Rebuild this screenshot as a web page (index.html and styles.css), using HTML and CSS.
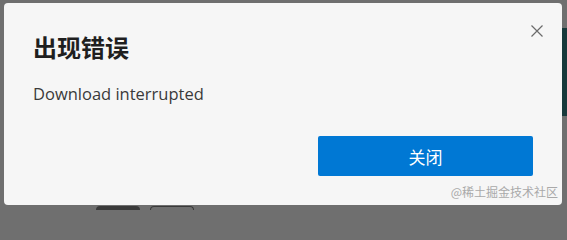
FILE: index.html
```html
<!DOCTYPE html>
<html lang="zh-CN">
<head>
<meta charset="utf-8">
<link rel="stylesheet" href="styles.css">
</head>
<body>
<div class="page">
  <div class="dialog">
    <button class="close" aria-label="关闭">
      <svg width="12" height="12" viewBox="0 0 12 12"><path d="M0.5 0.5L11.5 11.5M11.5 0.5L0.5 11.5" stroke="#6b6b6b" stroke-width="1.2" fill="none"/></svg>
    </button>
    <h1 class="title">出现错误</h1>
    <p class="message">Download interrupted</p>
    <div class="actions">
      <button class="primary">关闭</button>
    </div>
  </div>
  <div class="underlay">
    <span class="chip dark"></span>
    <span class="chip outline"></span>
  </div>
  <div class="watermark">@稀土掘金技术社区</div>
</div>
</body>
</html>
```
FILE: styles.css
```css
html, body {
  margin: 0;
  padding: 0;
  overflow: hidden;
}
body {
  width: 567px;
  height: 210px;
  background: #6f6f6f;
  font-family: "Open Sans", "Noto Sans", "Noto Sans CJK SC", sans-serif;
}
.page {
  position: relative;
  width: 567px;
  height: 210px;
  overflow: hidden;
  background:
    linear-gradient(#17393b, #17393b) 562px 28px / 5px 88px no-repeat,
    #6f6f6f;
}
.dialog {
  position: relative;
  margin: 3px 0 0 4px;
  width: 558px;
  height: 202px;
  box-sizing: border-box;
  background: #f6f6f6;
  border-radius: 4px;
  padding: 27px 29px 0 29px;
  display: flex;
  flex-direction: column;
}
.close {
  position: absolute;
  top: 22px;
  right: 19px;
  width: 12px;
  height: 12px;
  padding: 0;
  border: 0;
  background: none;
  display: flex;
}
.title {
  margin: 0;
  font-family: "Noto Sans CJK SC", sans-serif;
  font-weight: 700;
  font-size: 24px;
  line-height: 34px;
  color: #1f1f1f;
}
.message {
  margin: 19px 0 0 0;
  font-size: 16.5px;
  line-height: 22px;
  color: #3a3a3a;
}
.actions {
  display: flex;
  justify-content: flex-end;
  margin-top: 31px;
}
.primary {
  width: 215px;
  height: 40px;
  border: 0;
  border-radius: 2px;
  background: #0078d4;
  color: #fff;
  font-family: "Noto Sans CJK SC", sans-serif;
  font-size: 17px;
  padding: 0;
}
.underlay {
  display: flex;
  gap: 10px;
  padding-left: 96px;
  margin-top: 1px;
}
.chip {
  width: 44px;
  height: 4px;
  border-radius: 4px 4px 0 0;
  box-sizing: border-box;
}
.chip.dark { background: #3a3a3a; }
.chip.outline { border: 1px solid #3a3a3a; border-bottom: 0; }
.watermark {
  position: absolute;
  right: 9px;
  top: 183px;
  font-family: "Noto Sans CJK SC", sans-serif;
  font-size: 12px;
  line-height: 18px;
  color: #a9a9a9;
}
```
